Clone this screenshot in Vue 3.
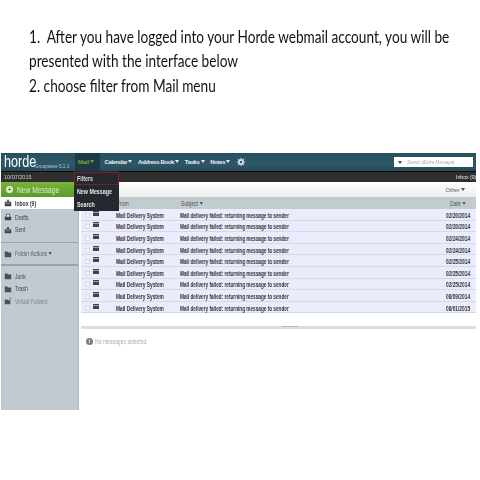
<script setup>
const rows = ['02/20/2014','02/20/2014','02/24/2014','02/24/2014','02/25/2014','02/25/2014','02/25/2014','08/09/2014','08/01/2015']
const nav = ['Calendar','Address Book','Tasks','Notes']
</script>

<template>
  <div class="page">
    <div class="intro">
      <p>1.&nbsp; After you have logged into your Horde webmail account, you will be</p>
      <p>presented with the interface below</p>
      <p>2. choose filter from Mail menu</p>
    </div>
    <div class="app">
      <header class="top">
        <div class="logo"><span class="word">horde</span><span class="sub">Groupware 5.1.1</span></div>
        <div class="mail-tab">Mail <i class="tri"></i></div>
        <nav class="nav">
          <span v-for="n in nav" :key="n" class="nav-item">{{ n }} <i class="tri white"></i></span>
          <svg class="gear" viewBox="0 0 10 10" width="8" height="8">
            <circle cx="5" cy="5" r="2.6" fill="none" stroke="#e8eef0" stroke-width="1.8"/>
            <path d="M5 0v2M5 8v2M0 5h2M8 5h2M1.5 1.5l1.4 1.4M7.1 7.1l1.4 1.4M1.5 8.5l1.4-1.4M7.1 2.9l1.4-1.4" stroke="#e8eef0" stroke-width="1.3"/>
          </svg>
        </nav>
        <div class="search"><i class="tri dark"></i><span class="sq">Search (Entire Message)</span></div>
      </header>
      <div class="datebar"><span>10/07/2015</span><span class="inbox-count">Inbox (9)</span></div>
      <div class="workspace">
        <aside class="side">
          <div class="new-msg"><span class="plus">+</span><span class="sq">New Message</span></div>
          <div class="folder active"><svg class="fi" viewBox="0 0 10 10" width="8" height="8"><path d="M1 3h2l2 2 2-2h2v6H1z" fill="#3c4347"/><path d="M3.5 1h3v3H8L5 6.5 2 4h1.5z" fill="#3c4347" stroke="#fff" stroke-width=".5"/></svg><span class="sq">Inbox (9)</span></div>
          <div class="folder drafts"><svg class="fi" viewBox="0 0 10 10" width="8" height="8"><path d="M1 4.5h8V9H1z" fill="#3c4347"/><path d="M3 4.5V1.5h4v3" fill="#fff" stroke="#3c4347"/></svg><span class="sq">Drafts</span></div>
          <div class="folder"><svg class="fi" viewBox="0 0 10 10" width="8" height="8"><path d="M1 4h8v5H1z" fill="#3c4347"/><path d="M5 .5 8 3.5H6.5V6h-3V3.5H2z" fill="#3c4347" stroke="#fff" stroke-width=".5"/></svg><span class="sq">Sent</span></div>
          <div class="rule"></div>
          <div class="folder actions"><svg class="fi" viewBox="0 0 10 10" width="8" height="8"><path d="M1 2h3l1 1h4v6H1z" fill="#4a4f52"/></svg><span class="sq">Folder Actions <i class="tri grey"></i></span></div>
          <div class="rule second"></div>
          <div class="folder"><svg class="fi" viewBox="0 0 10 10" width="8" height="8"><path d="M1 2h3l1 1h4v6H1z" fill="#4a4f52"/></svg><span class="sq">Junk</span></div>
          <div class="folder"><svg class="fi" viewBox="0 0 10 10" width="8" height="8"><path d="M1 2h3l1 1h4v6H1z" fill="#4a4f52"/></svg><span class="sq">Trash</span></div>
          <div class="folder faint"><svg class="fi" viewBox="0 0 10 10" width="8" height="8"><path d="M1 3h3l1 1h3v5H1z" fill="#4a5558"/><circle cx="8" cy="2" r="1.4" fill="#7d8a8e"/></svg><span class="sq">Virtual Folders</span></div>
        </aside>
        <main class="content">
          <div class="toolbar"><span class="other">Other <i class="tri grey"></i></span></div>
          <div class="list-head">
            <span class="c-from sq">From</span>
            <span class="c-subj"><span class="sq">Subject <i class="tri grey"></i></span></span>
            <span class="c-date"><span class="sq">Date <i class="tri grey"></i></span></span>
          </div>
          <div class="rows">
            <div v-for="(d, i) in rows" :key="i" class="row">
              <span class="check"></span>
              <svg class="env" viewBox="0 0 6 5" width="6" height="5"><path d="M0 0h6v5H0z" fill="#3d4448"/><path d="M0 1.5h6" stroke="#dfe3f5" stroke-width=".6"/></svg>
              <span class="c-from"><span class="sq">Mail Delivery System</span></span>
              <span class="c-subj"><span class="sq">Mail delivery failed: returning message to sender</span></span>
              <span class="c-date"><span class="sq">{{ d }}</span></span>
            </div>
          </div>
          <div class="splitter"><span class="grip"></span></div>
          <div class="preview"><span class="info">i</span><span class="sq">No messages selected.</span></div>
        </main>
      </div>
      <div class="menu">
        <div class="menu-item hot"><span class="sq">Filters</span></div>
        <div class="menu-item"><span class="sq">New Message</span></div>
        <div class="menu-item"><span class="sq">Search</span></div>
      </div>
    </div>
  </div>
</template>

<style>
html, body { margin: 0; background: #fff; }
</style>

<style scoped>
.page { width: 480px; height: 480px; overflow: hidden; background: #fff; font-family: "Liberation Sans", Arial, sans-serif; }
.sq { display: inline-block; transform: scaleX(.78); transform-origin: left center; white-space: nowrap; }
.intro { padding: 24.5px 0 0 29px; height: 153px; box-sizing: border-box; font-family: Lato, "Liberation Sans", sans-serif; font-size: 17px; line-height: 24.5px; color: #111; filter: blur(.25px); }
.intro p { margin: 0; white-space: nowrap; transform: scaleX(.802); transform-origin: left center; }
.app { position: relative; margin-left: 1px; width: 475px; filter: blur(.35px); }
.top { height: 19px; display: flex; align-items: stretch; background: linear-gradient(#27505f, #2e5869 60%, #274a58); border-bottom: 1px solid #0c0c0c; box-sizing: border-box; }
.logo { width: 74px; display: flex; align-items: flex-end; color: #fff; padding: 0 0 1px 3px; box-sizing: border-box; white-space: nowrap; overflow: hidden; }
.word { display: inline-block; width: 31px; font-size: 17px; line-height: 17px; transform: scaleX(.74); transform-origin: left bottom; }
.sub { font-size: 5px; line-height: 7px; color: #b9c8cd; transform: scaleX(.92); transform-origin: left bottom; }
.mail-tab { width: 25px; background: #1e3a47; color: #76a52f; font-size: 6px; font-weight: 700; line-height: 18px; padding-left: 3px; box-sizing: border-box; white-space: nowrap; letter-spacing: -.2px; }
.nav { display: flex; align-items: center; gap: 5.5px; color: #e6edf0; font-size: 6px; font-weight: 700; padding-left: 4.5px; white-space: nowrap; letter-spacing: -.38px; }
.gear { margin-left: 1px; }
.search { margin-left: auto; margin-right: 3px; margin-top: 4px; width: 79px; height: 10px; background: #fff; display: flex; align-items: center; gap: 5px; padding-left: 4px; box-sizing: border-box; color: #a5aaac; font-size: 5.5px; font-style: italic; white-space: nowrap; }
.tri { display: inline-block; width: 0; height: 0; border-left: 2px solid transparent; border-right: 2px solid transparent; border-top: 3px solid #76a52f; vertical-align: 1px; }
.tri.white { border-top-color: #e6edf0; }
.tri.dark { border-top-color: #3c4347; }
.tri.grey { border-top-color: #4b5154; }
.datebar { height: 10px; background: #2e2e2c; color: #cfd3d3; font-size: 5.5px; line-height: 10px; padding-left: 3px; display: flex; justify-content: space-between; white-space: nowrap; }
.inbox-count { color: #dfe2e2; letter-spacing: -.2px; }
.workspace { display: grid; grid-template-columns: 78px 1fr; height: 228px; }
.side { background: #c1cad0; border-right: 1px solid #b5bcc0; box-sizing: border-box; font-size: 6.5px; color: #3e4548; }
.new-msg { height: 15px; background: linear-gradient(#7ab33c, #5c9a29); color: #dfeccb; font-size: 9.5px; line-height: 15px; display: flex; align-items: center; gap: 4px; padding-left: 5px; white-space: nowrap; }
.new-msg .sq { transform: scaleX(.7); }
.plus { width: 7px; height: 7px; flex: none; border-radius: 50%; background: #e6f0d2; color: #5c9a29; font-size: 7px; font-weight: 700; line-height: 7px; text-align: center; }
.folder { height: 12.5px; display: flex; align-items: center; gap: 3px; padding-left: 3px; white-space: nowrap; }
.folder.active { background: #fff; height: 12px; font-weight: 700; color: #34393c; }
.drafts { margin-top: 2px; }
.fi { flex: none; }
.rule { height: 1px; background: #9aa4a8; margin-top: 6px; }
.rule.second { height: 2px; margin-top: 4px; margin-bottom: 4px; }
.actions { margin-top: 4px; height: 13px; color: #5c6367; }
.faint { color: #7d868a; }
.content { min-width: 0; display: flex; flex-direction: column; padding-left: 2px; }
.toolbar { height: 15px; background: linear-gradient(#fff, #eceeee); display: flex; align-items: center; justify-content: flex-end; padding-right: 11px; font-size: 6px; color: #5b6164; letter-spacing: -.2px; }
.list-head { height: 12px; background: #c2cccf; display: flex; align-items: center; font-size: 6.5px; color: #4a5154; }
.list-head .c-from { margin-left: 36px; width: 64px; }
.list-head .c-subj { flex: 1; }
.list-head .c-date { width: 26px; }
.rows { height: 104.5px; }
.row { height: 11.6px; display: flex; align-items: center; background: #eaecfb; border-bottom: 1px solid #d5d9e6; box-sizing: border-box; font-size: 6.5px; font-weight: 700; color: #2f343a; white-space: nowrap; padding-top: 2px; }
.row .sq { transform: scaleX(.74); }
.row .c-subj .sq { transform: scaleX(.72); }
.check { width: 5px; height: 5px; border: 1px solid #d9dce6; background: #f4f5fc; margin-left: 4px; box-sizing: border-box; }
.env { margin-left: 3px; margin-bottom: 4px; }
.row .c-from { margin-left: 17px; width: 64px; }
.row .c-subj { flex: 1; }
.row .c-date { width: 30px; }
.splitter { height: 3px; margin-top: 12px; background: #dcdedd; display: flex; justify-content: center; }
.grip { width: 16px; height: 1px; background: #b3b6b6; margin-left: 22px; }
.preview { display: flex; align-items: center; gap: 2px; padding: 9px 0 0 5px; font-size: 6.5px; color: #a9adae; white-space: nowrap; }
.info { width: 7px; height: 7px; flex: none; border-radius: 50%; background: #777d80; color: #fff; font-size: 5px; line-height: 7px; text-align: center; font-weight: 700; }
.menu { position: absolute; left: 73px; top: 18px; width: 45px; height: 40px; background: #23292e; padding-top: 1px; box-sizing: border-box; }
.menu-item { height: 13px; line-height: 13px; padding-left: 3px; font-size: 6.5px; font-weight: 700; color: #e4e8ea; white-space: nowrap; box-sizing: border-box; }
.menu-item .sq { transform: scaleX(.82); }
.menu-item.hot { border: 1px solid #7d1f2a; padding-left: 2px; line-height: 11px; color: #d8dcdc; }
</style>
